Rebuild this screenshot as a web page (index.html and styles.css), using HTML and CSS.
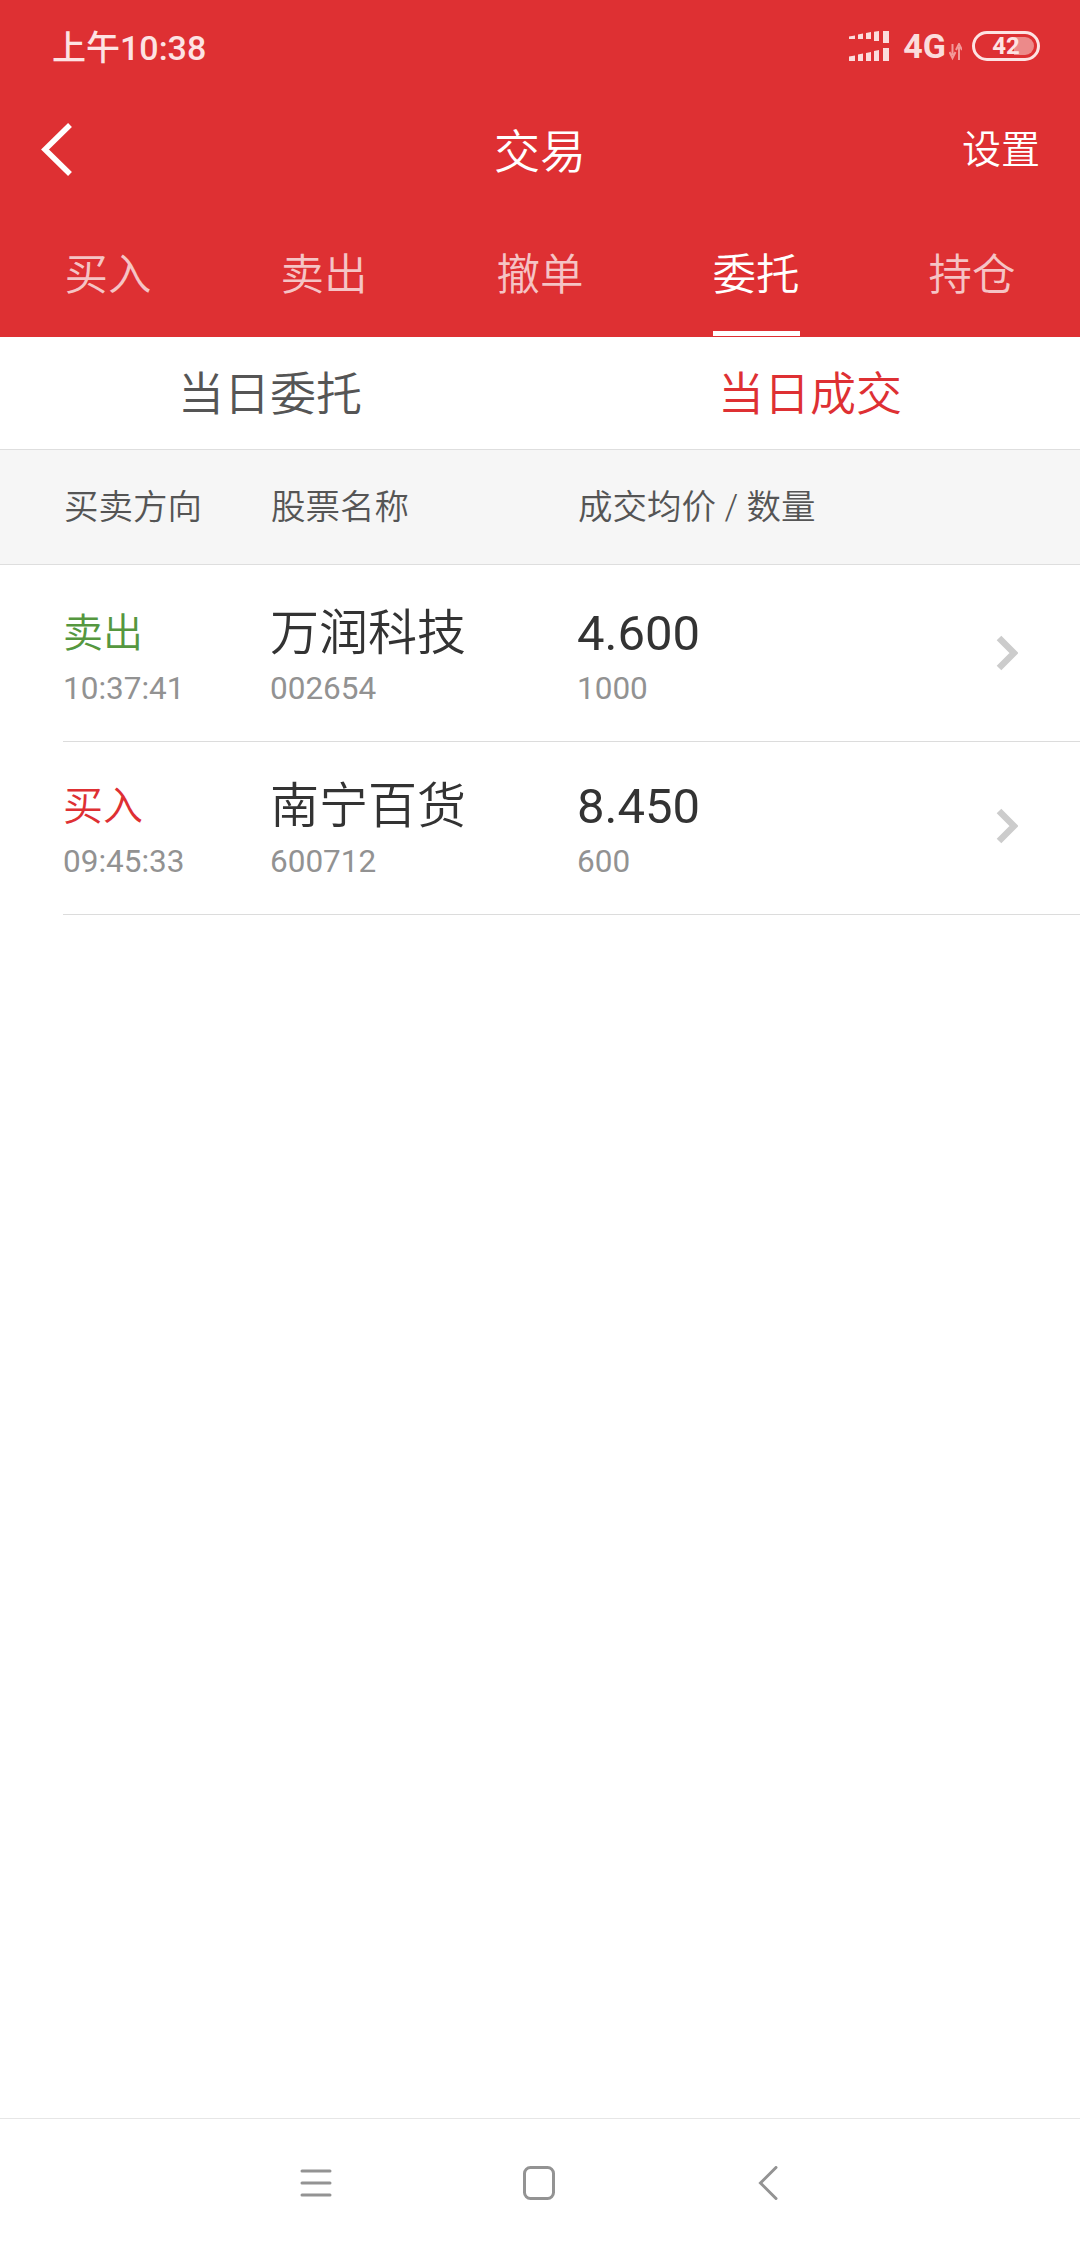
FILE: index.html
```html
<!doctype html>
<html lang="zh-CN">
  <head>
    <meta charset="UTF-8" />
    <meta name="viewport" content="width=device-width, initial-scale=1.0" />
    <title>交易</title>
    <link rel="stylesheet" href="styles.css">
  </head>
  <body>
    <div class="app">
      <div class="header">
        <div class="status-bar">
          <span class="status-time">上午10:38</span>
          <div class="status-icons">
            <svg class="signal" width="40" height="30" viewBox="0 0 40 30">
              <path d="M0 5.500L6 4.500V8H0ZM9 3.500L14 2.500V8H9ZM17 2L22 1V8H17ZM25 .7L30 0V10H25ZM34 0H40V12H34Z" fill="#fbdcdc" />
              <path d="M0 25.500L6 24.500V30H0ZM9 23.500L14 22.500V30H9ZM17 22L22 21V30H17ZM25 20L30 19V30H25ZM34 17H40V30H34Z" fill="#fbdcdc" />
            </svg>
            <span class="network">4G</span>
            <svg class="arrows" width="13" height="18" viewBox="0 0 13 18">
              <path d="M3.500 1V12M.5 9L3.500 15L6.500 9" fill="none" stroke="#f29a9a" stroke-width="2" />
              <path d="M10 17V4M7 7L10 1L13 7" fill="none" stroke="#f29a9a" stroke-width="2" />
            </svg>
            <div class="battery">
              <span class="battery-fill"></span>
              <span class="battery-level">42</span>
            </div>
          </div>
        </div>
        <div class="nav-bar">
          <svg class="back" width="38" height="58" viewBox="0 0 38 58">
            <path d="M34 4L9 28.500L34 53" fill="none" stroke="#fff" stroke-width="5.500" />
          </svg>
          <h1 class="title">交易</h1>
          <span class="settings">设置</span>
        </div>
        <div class="tabs">
          <div class="tab"><span class="tab-label">买入</span></div>
          <div class="tab"><span class="tab-label">卖出</span></div>
          <div class="tab"><span class="tab-label">撤单</span></div>
          <div class="tab"><span class="tab-label active">委托</span></div>
          <div class="tab"><span class="tab-label">持仓</span></div>
        </div>
      </div>

      <div class="subtabs">
        <div class="subtab">当日委托</div>
        <div class="subtab active">当日成交</div>
      </div>

      <div class="table-head">
        <span class="col-side">买卖方向</span>
        <span class="col-name">股票名称</span>
        <span class="col-price">成交均价 / 数量</span>
      </div>

      <div class="list">
        <div class="row">
          <div class="col-side">
            <div class="side sell">卖出</div>
            <div class="sub">10:37:41</div>
          </div>
          <div class="col-name">
            <div class="main">万润科技</div>
            <div class="sub">002654</div>
          </div>
          <div class="col-price">
            <div class="main">4.600</div>
            <div class="sub">1000</div>
          </div>
          <svg class="chevron" width="22" height="36" viewBox="0 0 22 36">
            <path d="M3 3L18 18L3 33" fill="none" stroke="#cccccc" stroke-width="6.500" />
          </svg>
        </div>
        <div class="row">
          <div class="col-side">
            <div class="side buy">买入</div>
            <div class="sub">09:45:33</div>
          </div>
          <div class="col-name">
            <div class="main">南宁百货</div>
            <div class="sub">600712</div>
          </div>
          <div class="col-price">
            <div class="main">8.450</div>
            <div class="sub">600</div>
          </div>
          <svg class="chevron" width="22" height="36" viewBox="0 0 22 36">
            <path d="M3 3L18 18L3 33" fill="none" stroke="#cccccc" stroke-width="6.500" />
          </svg>
        </div>
      </div>

      <div class="system-nav">
        <svg width="32" height="28" viewBox="0 0 32 28">
          <path d="M2 2H30M2 14H30M2 26H30" fill="none" stroke="#939393" stroke-width="3" stroke-linecap="round" />
        </svg>
        <svg width="32" height="34" viewBox="0 0 32 34">
          <rect x="1.500" y="1.500" width="29" height="31" rx="6" fill="none" stroke="#939393" stroke-width="3" />
        </svg>
        <svg width="20" height="34" viewBox="0 0 20 34">
          <path d="M18 1.500L2.500 17L18 32.500" fill="none" stroke="#939393" stroke-width="3" stroke-linecap="round" />
        </svg>
      </div>
    </div>
  </body>
</html>
```

FILE: styles.css
```css
* {
  box-sizing: border-box;
}
body {
  font-family: Roboto, "Noto Sans CJK SC", sans-serif;
  background-color: #fff;
  margin: 0;
  padding: 0;
}
.app {
  width: 1080px;
  height: 2248px;
  display: flex;
  flex-direction: column;
  overflow: hidden;
}
.header {
  background-color: #de3033;
  color: #fff;
}
.status-bar {
  height: 96px;
  display: flex;
  align-items: center;
  justify-content: space-between;
  padding: 0 40px 5px 52px;
}
.status-time {
  font-size: 34px;
  font-weight: 500;
  color: #fde3e3;
}
.status-icons {
  display: flex;
  align-items: center;
}
.network {
  font-size: 34px;
  font-weight: 700;
  color: #fbdcdc;
  margin-left: 14px;
}
.arrows {
  margin: 12px 10px 0 3px;
}
.battery {
  position: relative;
  width: 68px;
  height: 30px;
  border: 3px solid #fde3e3;
  border-radius: 15px;
  display: flex;
  align-items: center;
  justify-content: center;
}
.battery-fill {
  position: absolute;
  top: 3px;
  right: 3px;
  bottom: 3px;
  width: 20px;
  border-radius: 0 9px 9px 0;
  background-color: #ec8a8a;
}
.battery-level {
  position: relative;
  font-size: 24px;
  font-weight: 700;
  color: #fde3e3;
}
.nav-bar {
  height: 108px;
  position: relative;
  display: flex;
  align-items: center;
  justify-content: center;
  padding-bottom: 5px;
}
.back {
  position: absolute;
  left: 36px;
  top: 25px;
}
.title {
  margin: 0;
  font-size: 46px;
  font-weight: 350;
}
.settings {
  position: absolute;
  right: 40px;
  top: 25px;
  font-size: 39px;
  font-weight: 350;
  line-height: 58px;
}
.tabs {
  height: 133px;
  display: flex;
  align-items: flex-end;
}
.tab {
  flex: 1;
  display: flex;
  justify-content: center;
  margin-bottom: 1px;
}
.tab-label {
  font-size: 43.500px;
  font-weight: 350;
  line-height: 60px;
  padding-bottom: 25px;
  border-bottom: 5px solid transparent;
  color: rgba(255, 255, 255, 0.72);
}
.tab-label.active {
  color: #fff;
  border-bottom-color: #fff;
}
.subtabs {
  height: 112px;
  display: flex;
  align-items: center;
  padding-bottom: 7px;
}
.subtab {
  flex: 1;
  text-align: center;
  font-size: 46px;
  font-weight: 350;
  color: #555;
}
.subtab.active {
  color: #de3033;
}
.table-head {
  height: 116px;
  display: flex;
  align-items: center;
  padding-left: 64px;
  padding-bottom: 7px;
  background-color: #f6f6f6;
  border-top: 1px solid #dedede;
  border-bottom: 1px solid #dedede;
  font-size: 34.500px;
  font-weight: 350;
  color: #555;
}
.col-side {
  width: 207px;
}
.col-name {
  width: 307px;
}
.col-price {
  flex: 1;
}
.list {
  flex: 1;
  padding-left: 63px;
  padding-top: 3px;
}
.row {
  height: 173.500px;
  display: flex;
  align-items: center;
  padding-top: 3px;
  padding-right: 62px;
  border-bottom: 1px solid #dcdcdc;
}
.side {
  font-size: 40px;
  font-weight: 350;
  line-height: 60px;
}
.side.sell {
  color: #55973f;
}
.side.buy {
  color: #de3033;
}
.main {
  font-size: 49px;
  line-height: 60px;
  color: #333;
}
.col-name .main {
  font-weight: 350;
}
.sub {
  font-size: 31.500px;
  line-height: 38px;
  margin-top: 6px;
  color: #929292;
}
.chevron {
  margin-bottom: 6px;
}
.system-nav {
  height: 130px;
  border-top: 1px solid #e6e6e6;
  display: flex;
  align-items: center;
  padding-left: 300px;
  padding-bottom: 2px;
  gap: 191px;
}
.system-nav svg:last-child {
  margin-left: 12px;
}
```
